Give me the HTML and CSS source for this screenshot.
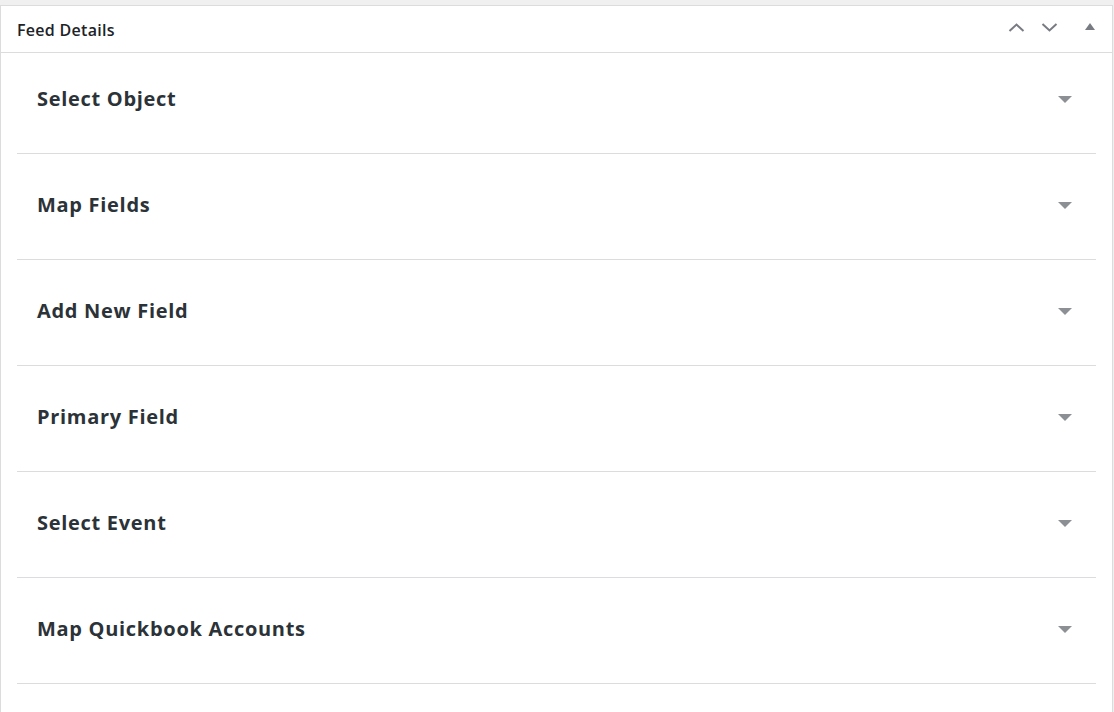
FILE: index.html
```html
<!DOCTYPE html>
<html lang="en">
<head>
    <meta charset="UTF-8">
    <meta name="viewport" content="width=device-width, initial-scale=1.0">
    <title>Feed Details</title>
    <link rel="stylesheet" href="styles.css">
</head>
<body>
    <div class="postbox">
        <div class="postbox-header">
            <h2 class="hndle">Feed Details</h2>
            <div class="handle-actions">
                <button class="handle-btn" aria-label="Move up">
                    <svg class="chevron" width="17" height="9" viewBox="0 0 17 9"><polyline points="1.5,8 8.5,1.5 15.5,8" /></svg>
                </button>
                <button class="handle-btn" aria-label="Move down">
                    <svg class="chevron" width="17" height="9" viewBox="0 0 17 9"><polyline points="1.5,1 8.5,7.5 15.5,1" /></svg>
                </button>
                <button class="handle-btn toggle" aria-label="Toggle panel">
                    <svg class="tri" width="10" height="7" viewBox="0 0 10 7"><polygon points="0,7 10,7 5,0" /></svg>
                </button>
            </div>
        </div>

        <div class="feed-body">
            <div class="feed-row">
                <div class="feed-row-head">
                    <h3>Select Object</h3>
                    <svg class="caret" width="14" height="7" viewBox="0 0 14 7"><polygon points="0,0 14,0 7,7" /></svg>
                </div>
            </div>
            <div class="feed-row">
                <div class="feed-row-head">
                    <h3>Map Fields</h3>
                    <svg class="caret" width="14" height="7" viewBox="0 0 14 7"><polygon points="0,0 14,0 7,7" /></svg>
                </div>
            </div>
            <div class="feed-row">
                <div class="feed-row-head">
                    <h3>Add New Field</h3>
                    <svg class="caret" width="14" height="7" viewBox="0 0 14 7"><polygon points="0,0 14,0 7,7" /></svg>
                </div>
            </div>
            <div class="feed-row">
                <div class="feed-row-head">
                    <h3>Primary Field</h3>
                    <svg class="caret" width="14" height="7" viewBox="0 0 14 7"><polygon points="0,0 14,0 7,7" /></svg>
                </div>
            </div>
            <div class="feed-row">
                <div class="feed-row-head">
                    <h3>Select Event</h3>
                    <svg class="caret" width="14" height="7" viewBox="0 0 14 7"><polygon points="0,0 14,0 7,7" /></svg>
                </div>
            </div>
            <div class="feed-row">
                <div class="feed-row-head">
                    <h3>Map Quickbook Accounts</h3>
                    <svg class="caret" width="14" height="7" viewBox="0 0 14 7"><polygon points="0,0 14,0 7,7" /></svg>
                </div>
            </div>
        </div>
    </div>
</body>
</html>
```

FILE: styles.css
```css
body {
    font-family: 'Open Sans', 'Noto Sans', sans-serif;
    margin: 0;
    padding: 5px 1px 0 0;
    background-color: #f0f0f1;
    color: #2c3338;
    overflow: hidden;
}
.postbox {
    background-color: #ffffff;
    border: 1px solid #dcdcde;
    min-height: 760px;
}
.postbox-header {
    display: flex;
    align-items: center;
    justify-content: space-between;
    height: 46px;
    padding: 0 4px 0 16px;
    border-bottom: 1px solid #dcdcde;
}
.hndle {
    margin: 0 0 -1px;
    font-size: 16px;
    font-weight: 600;
    letter-spacing: 0.3px;
    color: #1d2327;
}
.handle-actions {
    display: flex;
    align-items: center;
}
.handle-btn {
    display: flex;
    align-items: center;
    justify-content: center;
    width: 33px;
    height: 36px;
    padding: 0;
    border: none;
    background: none;
    cursor: pointer;
}
.handle-btn.toggle {
    width: 36px;
    margin-left: 6px;
}
.chevron {
    margin-top: -3px;
    fill: none;
    stroke: #787c82;
    stroke-width: 2;
}
.tri {
    margin-top: -5px;
    fill: #787c82;
}
.feed-body {
    padding: 0 16px;
}
.feed-row {
    padding-bottom: 10px;
    border-bottom: 1px solid #dcdcde;
}
.feed-row + .feed-row {
    margin-top: 5px;
}
.feed-row-head {
    display: flex;
    align-items: center;
    justify-content: space-between;
    height: 90px;
    padding: 0 24px 0 20px;
    cursor: pointer;
}
.feed-row-head h3 {
    margin: 0;
    font-size: 20px;
    font-weight: 700;
    letter-spacing: 0.7px;
    color: #2c3338;
}
.caret {
    margin-top: 3px;
    fill: #8c8f94;
}
```
